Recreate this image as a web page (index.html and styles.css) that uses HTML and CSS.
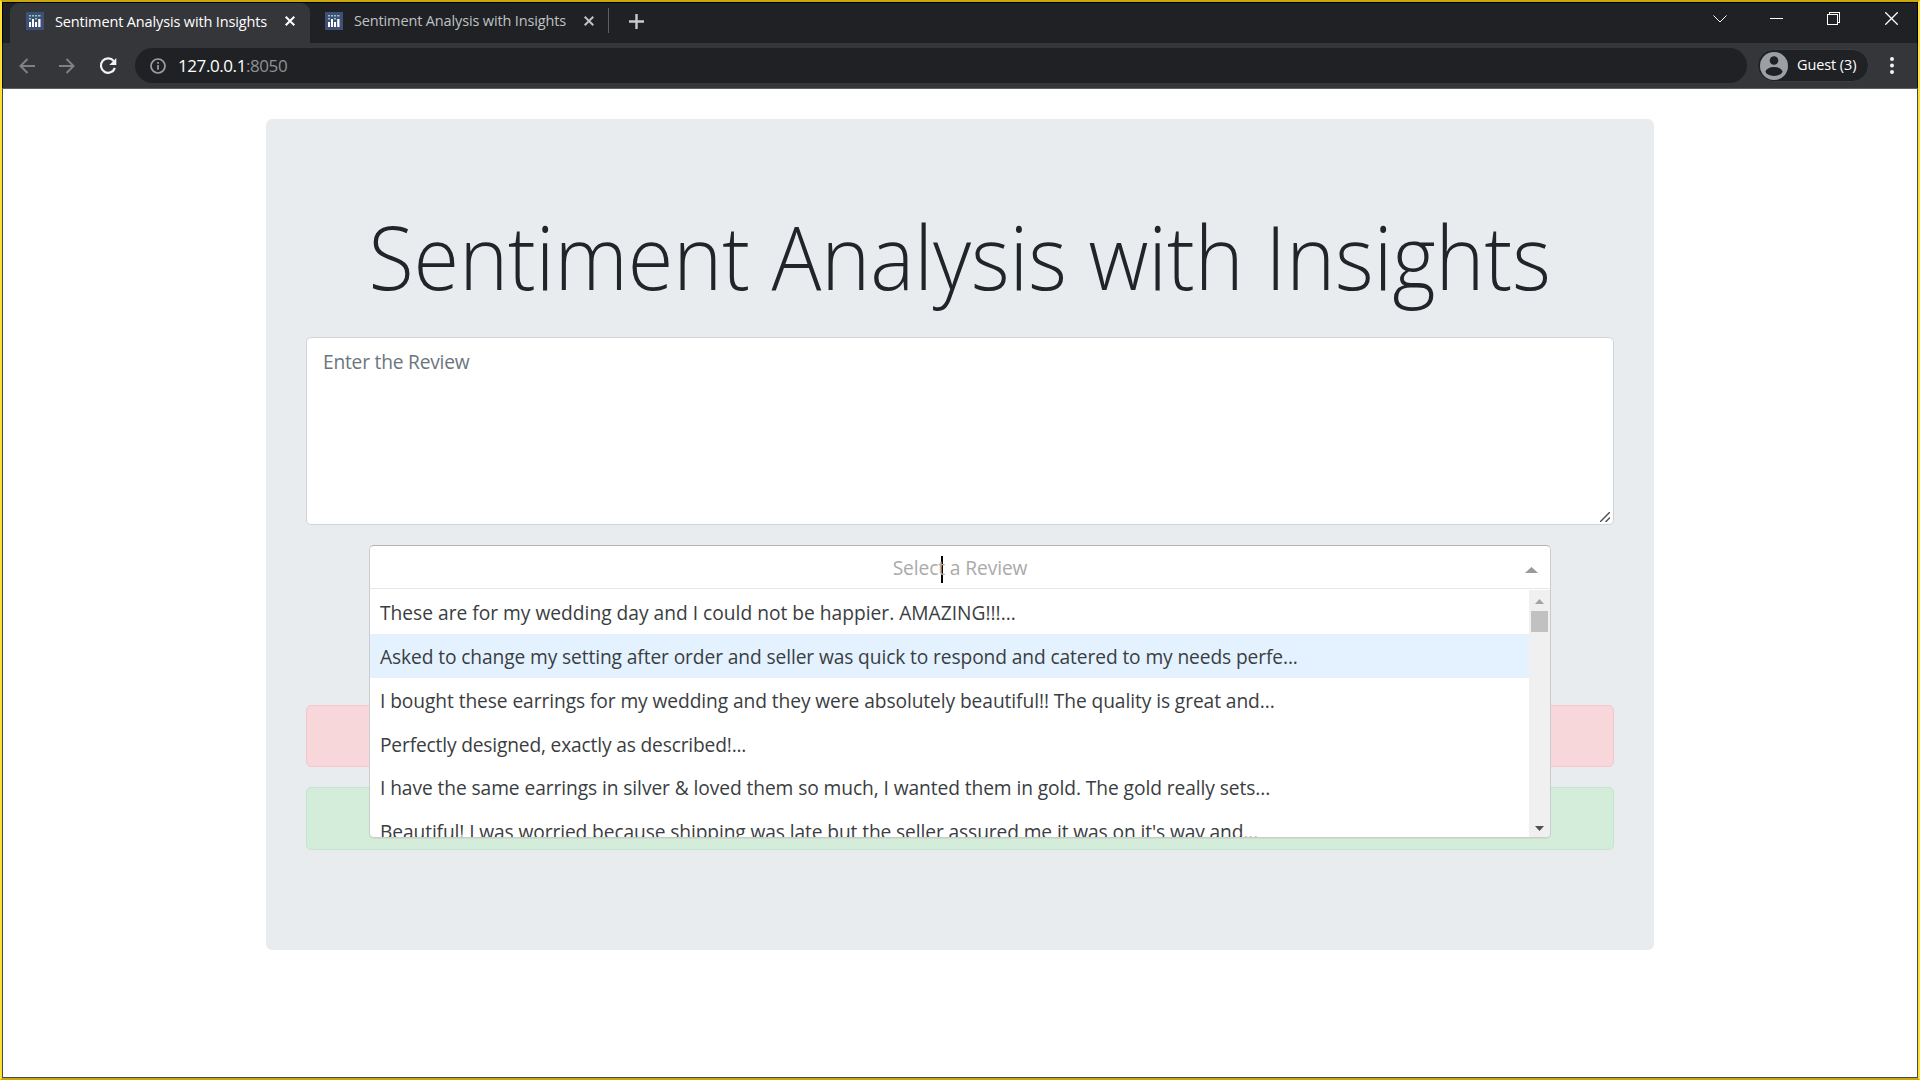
FILE: index.html
```html
<!DOCTYPE html>
<html lang="en">
<head>
<meta charset="utf-8">
<title>Sentiment Analysis with Insights</title>
<link rel="stylesheet" href="styles.css">
</head>
<body>
<svg width="0" height="0" class="defs">
  <symbol id="favicon" viewBox="0 0 18 18">
    <rect width="18" height="18" fill="#3f4f75"/>
    <g fill="#80cfbe"><rect x="3" y="3" width="2" height="1.500"/><rect x="6" y="3" width="2" height="1.500"/><rect x="9" y="3" width="2" height="1.500"/><rect x="12" y="3" width="2.500" height="1.500"/><rect x="3" y="6" width="2" height="1.500"/><rect x="9" y="6" width="2" height="1.500"/></g>
    <g fill="#fff"><rect x="3" y="10" width="2" height="5"/><rect x="6" y="7" width="2" height="8"/><rect x="9" y="10" width="2" height="5"/><rect x="12.200" y="7" width="2.300" height="8"/></g>
  </symbol>
</svg>
<div class="window">
  <header class="tabstrip">
    <div class="tab tab-active">
      <svg class="favicon"><use href="#favicon"/></svg>
      <span class="tab-title">Sentiment Analysis with Insights</span>
      <svg class="tab-close" viewBox="0 0 10 10"><path d="M.7 .7l8.600 8.600M9.300 .7l-8.600 8.600"/></svg>
    </div>
    <div class="tab tab-idle">
      <svg class="favicon"><use href="#favicon"/></svg>
      <span class="tab-title">Sentiment Analysis with Insights</span>
      <svg class="tab-close" viewBox="0 0 10 10"><path d="M.7 .7l8.600 8.600M9.300 .7l-8.600 8.600"/></svg>
    </div>
    <svg class="new-tab" viewBox="0 0 15 15"><path d="M7.500 0v15M0 7.500h15"/></svg>
    <div class="window-buttons">
      <svg width="14" height="8" viewBox="0 0 14 8"><path d="M.5 .5L7 7l6.500-6.500"/></svg>
      <svg width="13" height="13" viewBox="0 0 13 13"><path d="M0 6.500h13" class="crisp"/></svg>
      <svg width="13" height="13" viewBox="0 0 13 13"><path d="M.5 2.500h10v10H.5zM2.500 2V.5h10v10H11" class="crisp"/></svg>
      <svg width="13" height="13" viewBox="0 0 13 13"><path d="M.3 .3l12.400 12.400M12.700 .3L.3 12.700" class="cross"/></svg>
    </div>
  </header>
  <nav class="toolbar">
    <svg class="nav-icon dim" viewBox="0 0 16 16"><path d="M16 8H1.500M8.500 1L1.500 8l7 7"/></svg>
    <svg class="nav-icon dim" viewBox="0 0 16 16"><path d="M0 8h14.500M7.500 1l7 7-7 7"/></svg>
    <svg class="nav-icon reload" viewBox="0 0 18 18"><path d="M14.800 4.100A7.200 7.200 0 1 0 15.900 11"/><path d="M17.300 1v7h-7z" class="head"/></svg>
    <div class="omnibox">
      <svg class="info" viewBox="0 0 16 16"><circle cx="8" cy="8" r="7"/><path d="M8 7v4.800M8 4v1.800"/></svg>
      <span class="url">127.0.0.1<span class="port">:8050</span></span>
    </div>
    <div class="profile">
      <svg class="avatar" viewBox="0 0 28 28"><circle cx="14" cy="14" r="14" fill="#9aa0a6"/><circle cx="14" cy="8.500" r="4.300" fill="#202124"/><ellipse cx="14" cy="19.500" rx="8.400" ry="4.400" fill="#202124"/></svg>
      <span class="guest">Guest (3)</span>
    </div>
    <svg class="more" viewBox="0 0 4 17"><circle cx="2" cy="2" r="2"/><circle cx="2" cy="8.500" r="2"/><circle cx="2" cy="15" r="2"/></svg>
  </nav>
  <main class="page">
    <section class="jumbotron">
      <h1 class="title"><span>Sentiment Analysis with Insights</span></h1>
      <div class="review-input">
        <span>Enter the Review</span>
        <svg class="grip" viewBox="0 0 10 10"><path d="M0 10L10 0M5.500 10L10 5.500"/></svg>
      </div>
      <div class="select">
        <div class="control">
          <i class="caret"></i>
          <span class="placeholder">Select a Review</span>
          <svg class="arrow" viewBox="0 0 13 6"><path d="M0 6l6.500-6L13 6z"/></svg>
        </div>
        <div class="menu">
          <div class="options">
            <div class="option natural"><span>These are for my wedding day and I could not be happier. AMAZING!!!...</span></div>
            <div class="option focused"><span>Asked to change my setting after order and seller was quick to respond and catered to my needs perfe...</span></div>
            <div class="option snug"><span>I bought these earrings for my wedding and they were absolutely beautiful!! The quality is great and...</span></div>
            <div class="option tight"><span>Perfectly designed, exactly as described!...</span></div>
            <div class="option snug"><span>I have the same earrings in silver &amp; loved them so much, I wanted them in gold. The gold really sets...</span></div>
            <div class="option"><span>Beautiful! I was worried because shipping was late but the seller assured me it was on it's way and...</span></div>
          </div>
          <div class="scrollbar">
            <svg viewBox="0 0 9 5"><path d="M0 5l4.500-5L9 5z" fill="#a3a3a3"/></svg>
            <div class="thumb"></div>
            <svg viewBox="0 0 9 5"><path d="M0 0l4.500 5L9 0z" fill="#505050"/></svg>
          </div>
        </div>
      </div>
      <div class="alert danger"></div>
      <div class="alert success"></div>
    </section>
  </main>
</div>
</body>
</html>
```
FILE: styles.css
```css
* { box-sizing: border-box; }
body { margin: 0; background: #fff; font-family: "Open Sans", "Noto Sans", sans-serif; }
.defs { position: absolute; }
svg { flex: none; display: block; fill: none; }
span { white-space: nowrap; }

.window {
  width: 1920px; height: 1080px; overflow: hidden;
  display: flex; flex-direction: column;
  border: 2px solid #c9a90a;
  border-left-color: #ffe135; border-right-color: #ffe135;
}

.tabstrip {
  height: 41px; margin: 0 -2px; padding-left: 8px; flex: none;
  display: flex; align-items: flex-start;
  background: #202124; border: solid #c9ae0c; border-width: 0 2px;
  box-shadow: inset 0 1px #000, inset 1px 0 #000, inset -1px 0 #000;
}
.tab { display: flex; align-items: center; height: 40px; margin-top: 1px; padding-bottom: 4px; font-size: 14.5px; letter-spacing: -.14px; }
.tab-active { width: 300px; padding-left: 16px; color: #fff; background: #35363a; border-radius: 9px 9px 0 0; }
.tab-idle { width: 299px; height: 25px; margin-top: 6px; padding: 0 0 0 15px; color: #bfc1c5; border-right: 1px solid #5d5e62; }
.favicon { width: 18px; height: 18px; margin-right: 11px; }
.tab-title { width: 213px; }
.tab-close { width: 10px; height: 10px; margin-left: 17px; stroke: currentColor; stroke-width: 2; }
.new-tab { width: 15px; height: 15px; margin: 12px 0 0 20px; stroke: #c8cacd; stroke-width: 2.4; }
.window-buttons { display: flex; align-items: center; gap: 44px; margin: 10px 20px 0 auto; stroke: #fff; }
.window-buttons svg:first-child { margin-right: -1px; }
.window-buttons svg:last-child { margin-left: 1px; }
.crisp { shape-rendering: crispEdges; }
.cross { stroke-width: 1.3; }

.toolbar {
  height: 46px; margin: 0 -2px; padding: 0 20px 1px 17px; flex: none;
  display: flex; align-items: center;
  background: #35363a; border: solid #c9ae0c; border-width: 0 2px;
  box-shadow: inset 0 -1px #5f6064, inset 1px 0 #111, inset -1px 0 #111;
}
.nav-icon { width: 16px; height: 16px; margin-right: 24px; stroke: #808185; stroke-width: 2; }
.reload { width: 18px; height: 18px; margin-right: 18px; stroke: #f1f3f4; stroke-width: 2.2; }
.head { fill: #f1f3f4; stroke: none; }
.omnibox { width: 1612px; height: 35px; padding-left: 15px; display: flex; align-items: center; background: #202124; border-radius: 18px; }
.info { width: 16px; height: 16px; margin-right: 12px; stroke: #9aa0a6; stroke-width: 1.7; }
.url { padding-bottom: 1px; font-size: 17px; letter-spacing: -.42px; color: #fff; }
.port { color: #8f9194; }
.profile { width: 112px; height: 33px; margin-left: 10px; padding-left: 2px; display: flex; align-items: center; background: #202124; border: 1px solid #3c3d41; border-radius: 17px; }
.avatar { width: 28px; height: 28px; margin-right: 9px; }
.guest { padding-bottom: 2px; font-size: 14.5px; letter-spacing: -.1px; color: #fff; }
.more { width: 4px; height: 17px; margin-left: 21px; fill: #f1f3f4; }

.page { flex: 1; padding: 30px 0 0 263px; border: 1px solid #47484b; border-top: 0; }
.jumbotron { width: 1388px; height: 831px; padding: 80px 40px; background: #e9ecef; border-radius: 6px; }
.title { height: 138px; margin: 0; text-align: center; font-size: 88px; font-weight: 300; line-height: 114px; color: #212529; }
.title span { display: inline-block; margin: 0 -40px; transform: scaleX(.942); }
.review-input { height: 188px; padding: 9px 16px; position: relative; background: #fff; border: 1px solid #ced4da; border-radius: 5px; color: #6c757d; font-size: 19.2px; line-height: 30px; letter-spacing: -.22px; }
.grip { position: absolute; right: 3px; bottom: 2px; width: 10px; height: 10px; stroke: #555; stroke-width: 1.5; }

.select { position: relative; width: 1182px; margin: 20px auto 117px; font-size: 19.2px; letter-spacing: -.11px; }
.control { height: 43px; display: flex; align-items: center; justify-content: center; position: relative; background: #fff; border: 1px solid #ccc; border-top-color: #b3b3b3; border-bottom: 0; border-radius: 5px 5px 0 0; }
.placeholder { color: #aaa; position: relative; }
.caret { position: absolute; left: 571px; top: 10px; width: 2px; height: 27px; background: #000; }
.arrow { position: absolute; right: 12px; top: 21px; width: 13px; height: 6px; fill: #999; }
.menu { position: absolute; top: 43px; left: 0; width: 100%; height: 250px; display: flex; overflow: hidden; background: #fff; border: 1px solid #ccc; border-top-color: #e6e6e6; border-radius: 0 0 5px 5px; box-shadow: 0 1px 0 rgba(0,0,0,.06); }
.options { flex: 1; padding-top: 1px; }
.option { height: 43.75px; padding: 2px 0 0 10px; display: flex; align-items: center; color: #3a3d41; }
.natural { letter-spacing: 0; }
.snug { letter-spacing: -.085px; }
.tight { letter-spacing: -.17px; }
.focused { background: #e4f2ff; }
.scrollbar { width: 21px; margin-top: 1px; padding: 9px 0 6px; display: flex; flex-direction: column; align-items: center; background: #f0f0f0; }
.scrollbar svg { width: 9px; height: 5px; }
.thumb { width: 17px; height: 21px; margin: 7px 0 auto; background: #c1c1c1; }

.alert { border: 1px solid; border-radius: 5px; height: 62px; margin-bottom: 20px; }
.danger { background: #f8d7da; border-color: #f5c6cb; }
.success { height: 63px; margin: 0; background: #d4edda; border-color: #c3e6cb; }
```
